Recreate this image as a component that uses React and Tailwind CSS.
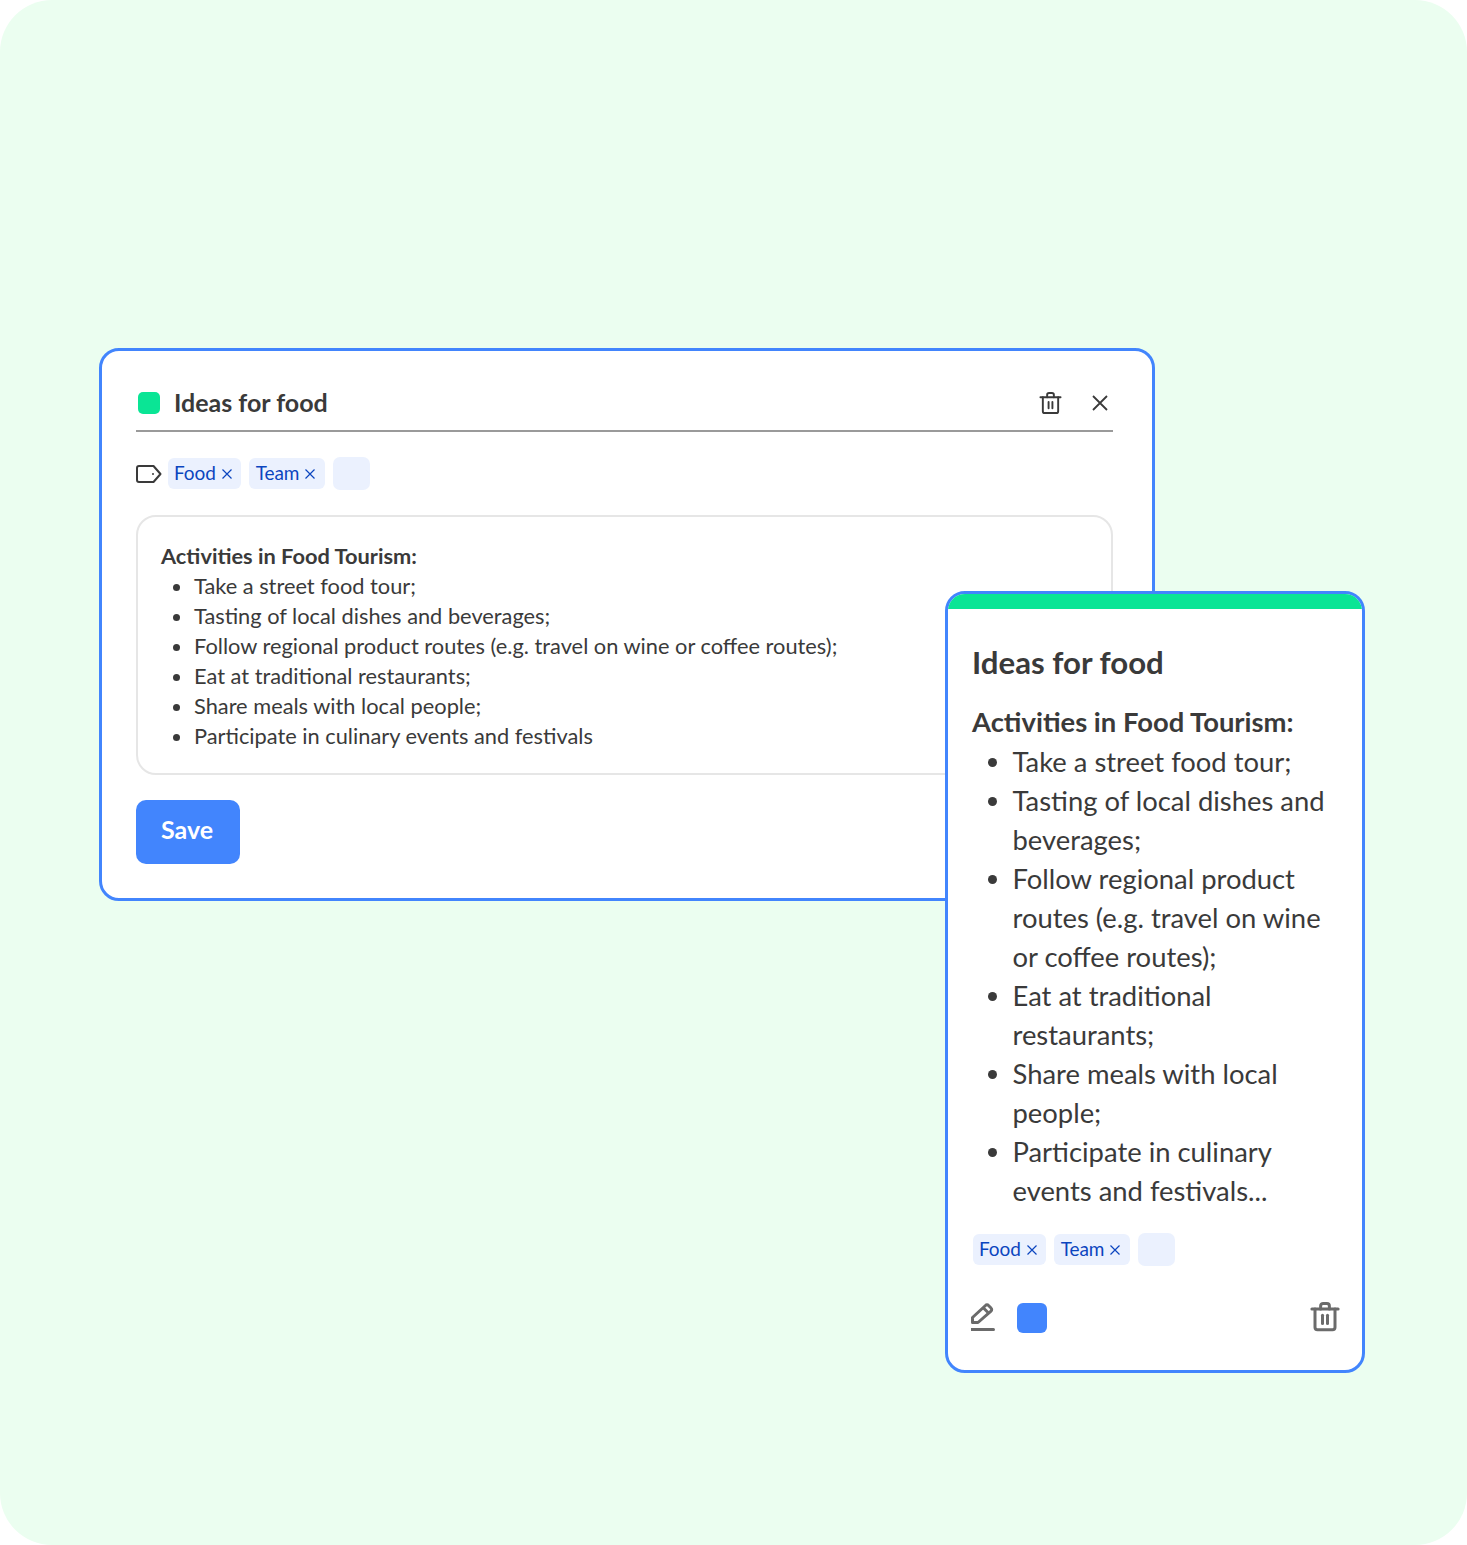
import React from 'react';

const Trash = ({ className, weight = 2 }) => (
    <svg viewBox="0 0 24 24" fill="none" stroke="currentColor" strokeWidth={weight} strokeLinecap="round" strokeLinejoin="round" className={className}>
        <path d="M1.500 6h21" />
        <path d="M8.500 6V3.500a2 2 0 0 1 2-2h3a2 2 0 0 1 2 2V6" />
        <path d="M4 6v14.500a2 2 0 0 0 2 2h12a2 2 0 0 0 2-2V6" />
        <path d="M10 11v6.500" />
        <path d="M14 11v6.500" />
    </svg>
);

const TagIcon = () => (
    <svg viewBox="0 0 26 18" fill="none" stroke="#3a3a3a" strokeWidth="2" strokeLinejoin="round" className="w-[26px] h-[18px]">
        <path d="M1 3a2 2 0 0 1 2-2h14.500l7 8-7 8H3a2 2 0 0 1-2-2z" />
        <circle cx="17" cy="9" r="1" fill="#3a3a3a" stroke="none" />
    </svg>
);

const Pencil = () => (
    <svg viewBox="0 0 24 28" fill="none" stroke="#6b6b6b" strokeWidth="3" strokeLinejoin="round" className="w-[24px] h-[28px] -ml-[1px] mb-[2px]">
        <path d="M1.500 19.500v-5L14.500 2.500a2 2 0 0 1 3 0l2.500 2.500a2 2 0 0 1 0 3L7 19.500z" />
        <path d="M12.500 5l5 5" />
        <path d="M0.500 26.500h22" strokeLinecap="round" />
    </svg>
);

const Chip = ({ label, className }) => (
    <span className={`inline-flex items-center h-[31px] gap-[6px] rounded-[6px] bg-[#EBF1FE] text-[#0B45BF] text-[19px] tracking-[-0.1px] ${className}`}>
        {label}
        <svg viewBox="0 0 10 10" stroke="currentColor" strokeWidth="1.200" className="w-[10px] h-[10px]">
            <path d="M0.500 0.500l9 9M9.500 0.500l-9 9" />
        </svg>
    </span>
);

const Chips = () => (
    <div className="flex items-center gap-2">
        <Chip label="Food" className="pl-[6px] pr-[9px]" />
        <Chip label="Team" className="pl-[7px] pr-[9.5px]" />
        <span className="w-[37px] h-[33px] rounded-[7px] bg-[#EBF1FE]"></span>
    </div>
);

const App = () => {
    return (
        <div className="relative w-[1467px] h-[1545px] bg-white font-['Lato',sans-serif] text-[#3a3a3a]">
            <div className="w-full h-full rounded-[52px] bg-[#EBFEF0] pt-[348px] pl-[99px]">
                {/* Editor card */}
                <div className="w-[1056px] h-[553px] bg-white border-[3px] border-[#4285FD] rounded-[20px] pt-[32px] pl-[34px] pr-[39px]">
                    <div className="flex items-center h-[49px] border-b-2 border-[#9a9a9a] pl-[2px] pr-[3px] pb-[7px]">
                        <span className="w-[22px] h-[22px] rounded-[5px] bg-[#0AE595]"></span>
                        <span className="ml-[14px] text-[25px] font-bold">Ideas for food</span>
                        <Trash className="ml-auto mb-[1px] w-[23px] h-[24px] text-[#3a3a3a]" />
                        <svg viewBox="0 0 16 16" stroke="#3a3a3a" strokeWidth="1.800" className="ml-[30px] mr-[2px] w-[16px] h-[16px]">
                            <path d="M1 1l14 14M15 1L1 15" />
                        </svg>
                    </div>
                    <div className="flex items-center gap-[6px] mt-[25px]">
                        <TagIcon />
                        <Chips />
                    </div>
                    <div className="mt-[25px] h-[260px] border-2 border-[#E6E6E6] rounded-[20px] pt-[24px] pl-[23px] text-[21.8px] leading-[30px]">
                        <p className="font-bold">Activities in Food Tourism:</p>
                        <ul className="list-disc pl-[33px]">
                            <li>Take a street food tour;</li>
                            <li>Tasting of local dishes and beverages;</li>
                            <li>Follow regional product routes (e.g. travel on wine or coffee routes);</li>
                            <li>Eat at traditional restaurants;</li>
                            <li>Share meals with local people;</li>
                            <li>Participate in culinary events and festivals</li>
                        </ul>
                    </div>
                    <button className="mt-[25px] w-[104px] h-[64px] rounded-[10px] bg-[#4285FD] text-white text-[25px] font-bold pb-[4px] pr-[2px]">Save</button>
                </div>
            </div>

            {/* Note card laid over the editor */}
            <div className="absolute left-[945px] top-[591px] w-[420px] h-[782px] bg-white border-[3px] border-[#4285FD] rounded-[20px] overflow-hidden">
                <div className="h-[15px] bg-[#0AE595]"></div>
                <div className="pt-[31px] px-[24px]">
                    <h2 className="text-[31.2px] leading-[44px] font-bold">Ideas for food</h2>
                    <div className="mt-[18px] text-[27.4px] leading-[39px]">
                        <p className="font-bold">Activities in Food Tourism:</p>
                        <ul className="list-disc pl-[40.5px] mt-[1px]">
                            <li>Take a street food tour;</li>
                            <li>Tasting of local dishes and beverages;</li>
                            <li>Follow regional product routes (e.g. travel on wine or coffee routes);</li>
                            <li>Eat at traditional restaurants;</li>
                            <li>Share meals with local people;</li>
                            <li>Participate in culinary events and festivals...</li>
                        </ul>
                    </div>
                    <div className="mt-[23px] pl-[1px]"><Chips /></div>
                    <div className="flex items-center mt-[35px]">
                        <Pencil />
                        <span className="ml-[22px] w-[30px] h-[30px] rounded-[6px] bg-[#4285FD]"></span>
                        <Trash weight={2.400} className="ml-auto mb-[3px] -mr-[2px] w-[30px] h-[31px] text-[#6b6b6b]" />
                    </div>
                </div>
            </div>
        </div>
    );
};

export default App;
